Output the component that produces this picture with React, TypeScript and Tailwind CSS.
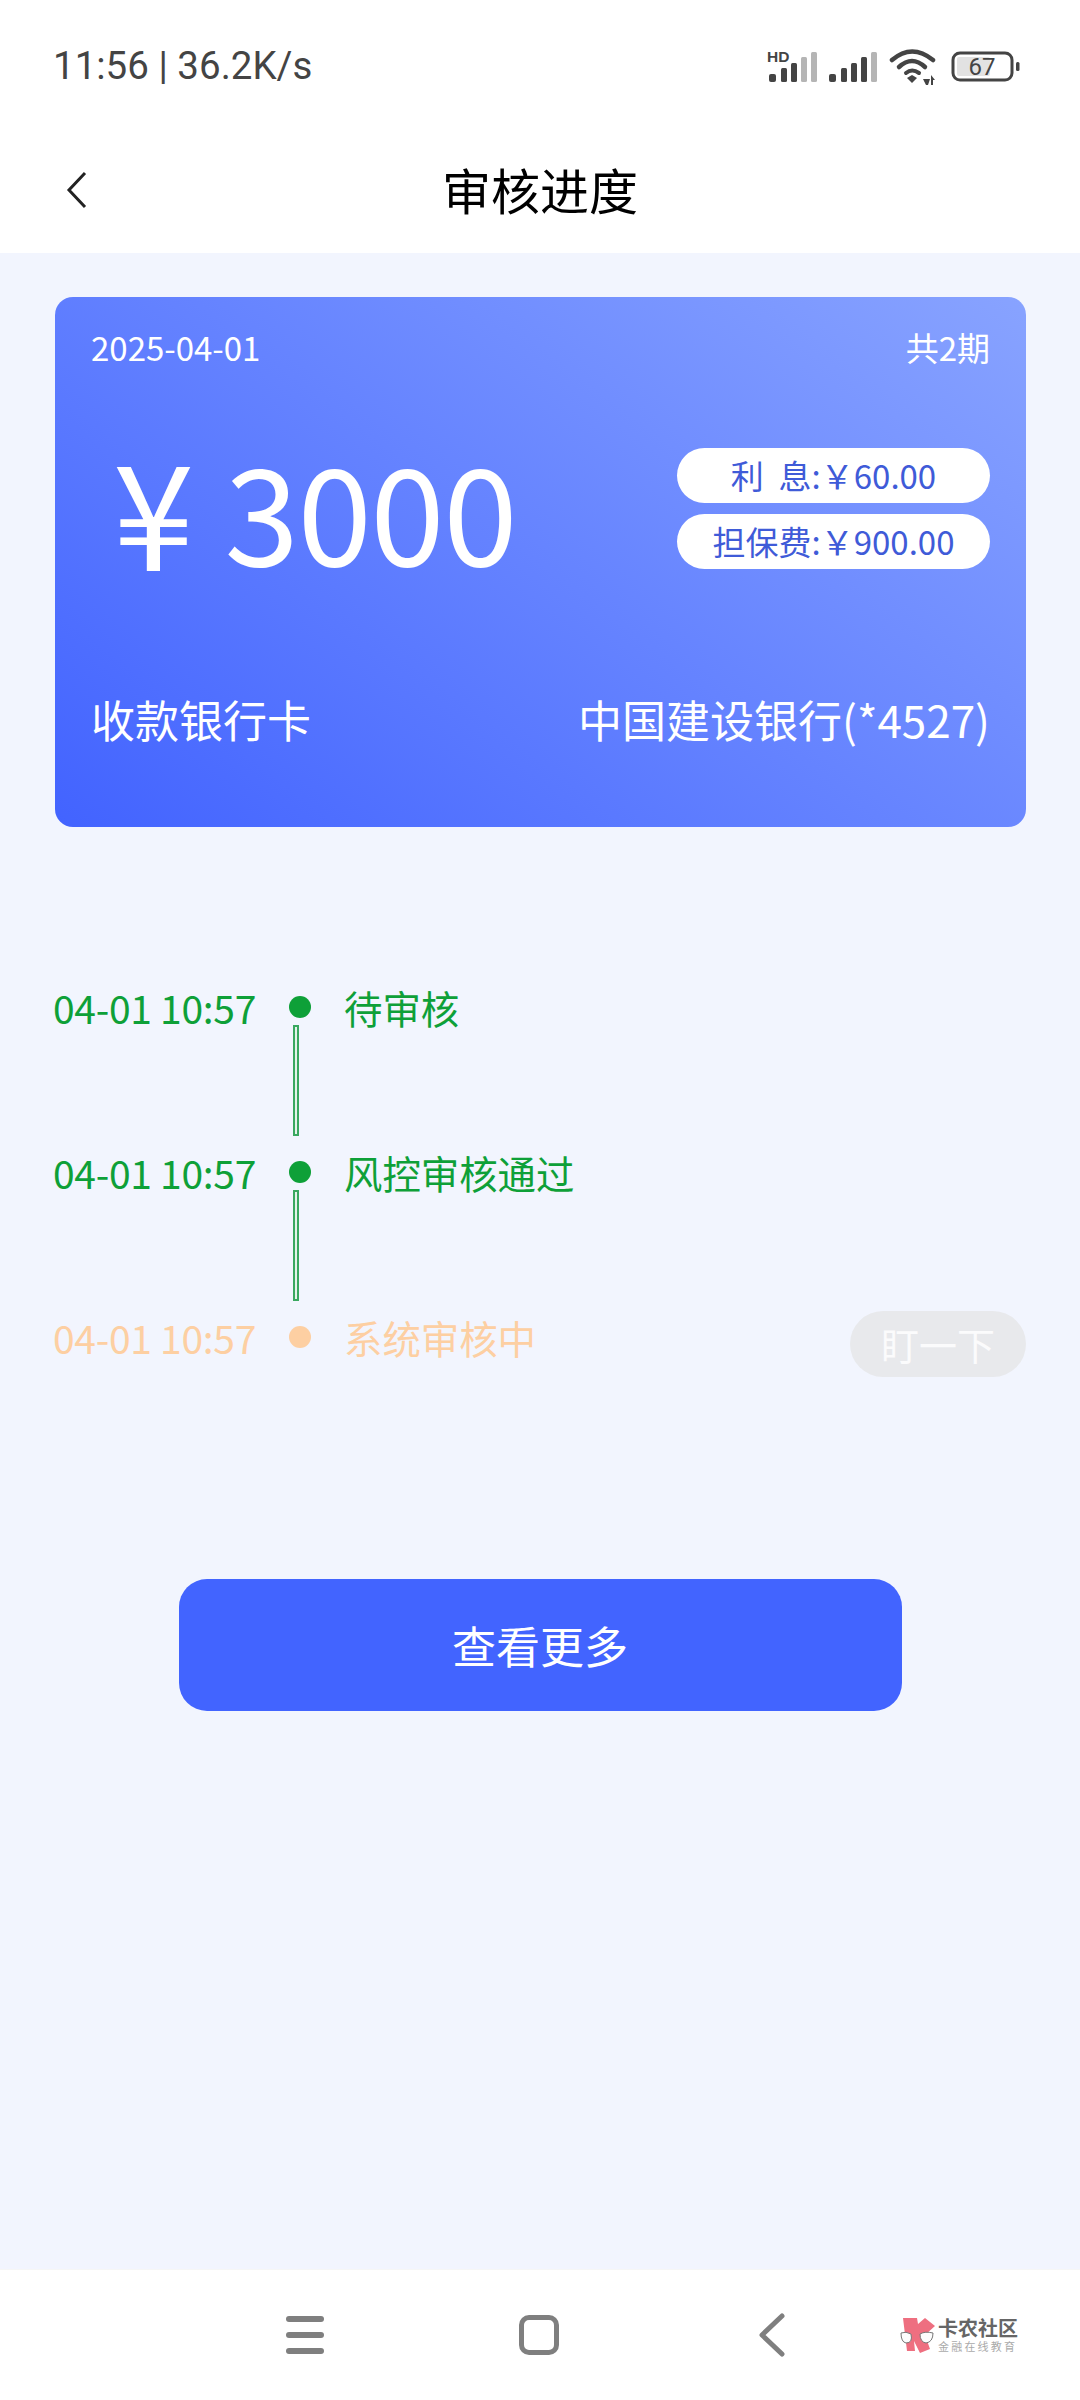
const cjk = "font-['Noto_Sans_CJK_SC','Noto_Sans',sans-serif]"

function StatusIcons() {
  return (
    <svg width="254" height="44" viewBox="0 0 254 44" className="block">
      <text x="0" y="18" fontSize="15.5" fontWeight="700" fill="#444" fontFamily="Liberation Sans, sans-serif">HD</text>
      <rect x="2" y="30" width="7" height="8" rx="2" fill="#444" />
      <rect x="14" y="24" width="6" height="14" rx="1.5" fill="#444" />
      <rect x="24" y="19" width="6" height="19" rx="1.5" fill="#444" />
      <rect x="34" y="13" width="6" height="25" rx="1.5" fill="#b5b5b5" />
      <rect x="44" y="8" width="6" height="30" rx="1.5" fill="#b5b5b5" />
      <rect x="62" y="30" width="7" height="8" rx="2" fill="#444" />
      <rect x="74" y="24" width="6" height="14" rx="1.5" fill="#444" />
      <rect x="84" y="19" width="6" height="19" rx="1.5" fill="#444" />
      <rect x="94" y="13" width="6" height="25" rx="1.5" fill="#444" />
      <rect x="104" y="8" width="6" height="30" rx="1.5" fill="#b5b5b5" />
      <path d="M125 16 Q145 -1 166 16" fill="none" stroke="#444" strokeWidth="4.5" strokeLinecap="round" />
      <path d="M132 23 Q145 11 158 23" fill="none" stroke="#444" strokeWidth="4.5" strokeLinecap="round" />
      <path d="M139 29 Q145 24 152 29" fill="none" stroke="#444" strokeWidth="4" strokeLinecap="round" />
      <path d="M140 34 L145 31 L150 34 L145 39 Z" fill="#444" />
      <path d="M156 35 h7 l-2 6 h-2 z M164 41 v-10 l4 5 h-2 v5 z" fill="#444" />
      <rect x="186" y="9" width="59" height="27" rx="7" fill="none" stroke="#444" strokeWidth="3" />
      <rect x="190" y="13" width="33" height="19" rx="2" fill="#e2e2e2" />
      <text x="215" y="31" textAnchor="middle" fontSize="24" fill="#444" fontFamily="Roboto, sans-serif">67</text>
      <rect x="249" y="18" width="3.5" height="9" rx="1.5" fill="#444" />
    </svg>
  )
}

function Step({ time, label, color, dot }: { time: string; label: string; color: string; dot: string }) {
  return (
    <div className={`flex items-center h-[36px] text-[38.4px] ${color}`}>
      <span className="w-[277px] pl-[53px] shrink-0 text-[39px] tracking-[-0.3px] whitespace-nowrap leading-none">{time}</span>
      <span className={`w-[22px] h-[22px] rounded-full shrink-0 mx-[12px] ${dot}`} />
      <span className="ml-[21px] whitespace-nowrap leading-none">{label}</span>
    </div>
  )
}

function Connector() {
  return <div className="ml-[293px] w-[6px] h-[111px] mb-[18px] border-2 border-[#3aa860] bg-[#e4f3ea]" />
}

function Logo() {
  return (
    <div className="flex items-center">
      <svg width="36" height="36" viewBox="0 0 36 36" className="shrink-0">
        <path d="M3 1 L17 1 L18 7 L25 1 L35 9 L25 18 L30 32 L20 36 L14 24 L15 34 L7 34 Z" fill="#ee6f80" />
        <path d="M1 16 Q6 14 11 17 Q13 26 6 26 Q1 25 1 16 Z" fill="#fdfdfd" stroke="#777" strokeWidth="1" />
        <path d="M20 17 Q25 14 33 16 Q33 25 26 26 Q20 25 20 17 Z" fill="#fdfdfd" stroke="#777" strokeWidth="1" />
      </svg>
      <div className="ml-[2px] flex flex-col items-start gap-[2px]">
        <span className="text-[20px] leading-[20px] font-bold text-[#666] whitespace-nowrap">卡农社区</span>
        <span className="text-[11px] leading-[12px] text-[#aaa] tracking-[2.2px] whitespace-nowrap">金融在线教育</span>
      </div>
    </div>
  )
}

export default function App() {
  return (
    <div className={`w-[1080px] h-[2400px] flex flex-col bg-[#f2f5fe] overflow-hidden ${cjk}`}>
      {/* Status bar + title */}
      <div className="bg-white h-[253px] shrink-0">
        <div className="h-[132px] pl-[53px] pr-[59px] flex items-center justify-between">
          <span className="text-[38.5px] text-[#444] font-['Roboto',sans-serif] whitespace-nowrap leading-none">11:56 | 36.2K/s</span>
          <StatusIcons />
        </div>
        <div className="relative flex items-center justify-center h-[112px]">
          <svg width="26" height="40" viewBox="0 0 26 40" className="absolute left-[64px] top-[38px]" fill="none" stroke="#222" strokeWidth="3">
            <path d="M21 3 L5 20 L21 37" />
          </svg>
          <span className="text-[49px] text-black leading-none">审核进度</span>
        </div>
      </div>

      {/* Loan card */}
      <div className="ml-[55px] mr-[54px] mt-[44px] h-[530px] rounded-[18px] bg-[linear-gradient(37deg,#4263ff,#88a3ff)] text-white px-[36px] flex flex-col shrink-0">
        <div className="flex justify-between items-center mt-[28px] h-[44px] text-[33px] leading-none">
          <span>2025-04-01</span>
          <span>共2期</span>
        </div>
        <div className="flex justify-between items-center mt-[66px]">
          <div className="flex items-center pl-[22px] text-[134px] tracking-[-1.5px] leading-none whitespace-nowrap">
            <span className="text-[146px] mr-[32px]">¥</span>
            <span>3000</span>
          </div>
          <div className="flex flex-col gap-[11px] w-[313px] text-[33px] text-[#3f5bd8]">
            <div className="h-[55px] rounded-full bg-white flex items-center justify-center leading-none whitespace-nowrap">利&nbsp;&nbsp;息:￥60.00</div>
            <div className="h-[55px] rounded-full bg-white flex items-center justify-center leading-none whitespace-nowrap">担保费:￥900.00</div>
          </div>
        </div>
        <div className="flex justify-between items-center mt-[116px] text-[44px] leading-none whitespace-nowrap">
          <span>收款银行卡</span>
          <span>中国建设银行(*4527)</span>
        </div>
      </div>

      {/* Progress timeline */}
      <div className="relative mt-[162px] shrink-0">
        <Step time="04-01 10:57" label="待审核" color="text-[#0ea038]" dot="bg-[#0ea038]" />
        <Connector />
        <Step time="04-01 10:57" label="风控审核通过" color="text-[#0ea038]" dot="bg-[#0ea038]" />
        <Connector />
        <Step time="04-01 10:57" label="系统审核中" color="text-[#fdcfa2]" dot="bg-[#fdcfa2]" />
        <button className="absolute left-[850px] top-[322px] w-[176px] h-[66px] rounded-full bg-[#e8e9ec] text-[#fbfbfc] text-[38px] leading-none">盯一下</button>
      </div>

      {/* More */}
      <button className="mt-[224px] mx-auto w-[723px] h-[132px] shrink-0 rounded-[28px] bg-[#4264ff] text-white text-[44px] leading-none">查看更多</button>

      {/* Nav bar */}
      <div className="mt-auto h-[131px] bg-white flex items-center shrink-0 border-t border-[#f6f6f6]">
        <div className="ml-[286px] w-[38px] flex flex-col gap-[10px]">
          <span className="h-[6px] rounded-full bg-[#7f7f7f]" />
          <span className="h-[6px] rounded-full bg-[#7f7f7f]" />
          <span className="h-[6px] rounded-full bg-[#7f7f7f]" />
        </div>
        <div className="ml-[195px] w-[40px] h-[40px] rounded-[10px] border-[5px] border-[#7f7f7f]" />
        <svg width="30" height="44" viewBox="0 0 30 44" className="ml-[198px]" fill="none" stroke="#7f7f7f" strokeWidth="5" strokeLinecap="round" strokeLinejoin="round">
          <path d="M25 3 L5 22 L25 41" />
        </svg>
        <div className="ml-[113px]"><Logo /></div>
      </div>
    </div>
  )
}
